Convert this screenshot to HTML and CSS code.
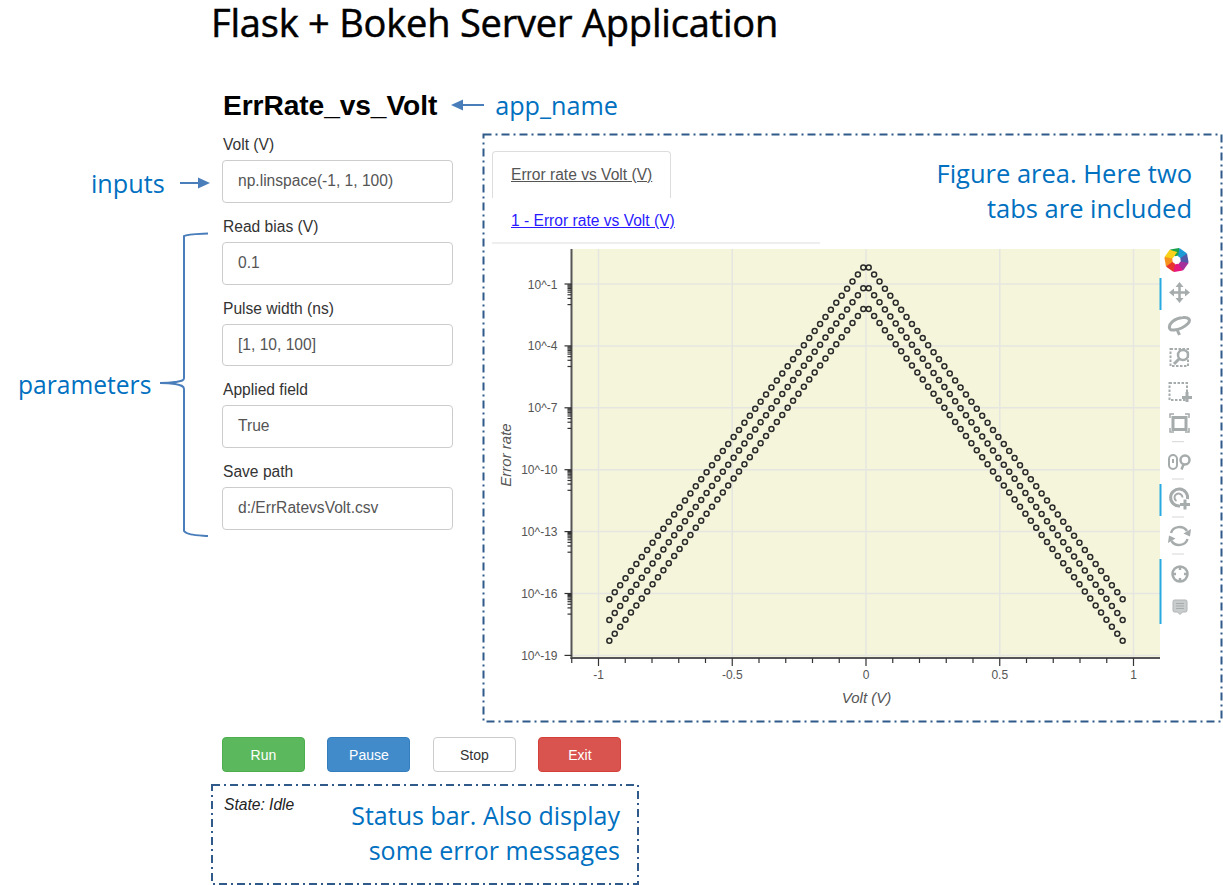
FILE: index.html
```html
<!DOCTYPE html>
<html lang="en">
<head>
<meta charset="utf-8">
<title>Flask + Bokeh Server Application</title>
<link rel="stylesheet" href="styles.css">
</head>
<body>
<div class="page">
  <h1 class="title">Flask + Bokeh Server Application</h1>
  <div class="app-head">
    <h2 class="app-name">ErrRate_vs_Volt</h2>
    <svg class="app-arrow" width="34" height="12" viewBox="0 0 34 12"><path d="M33 6H10" class="note-line"/><path d="M0 6l12-5.500v11z" class="note-fill"/></svg>
    <span class="note note-app">app_name</span>
  </div>
  <div class="workspace">
    <form class="form">
      <div class="field"><label class="field-label">Volt (V)</label><div class="input">np.linspace(-1, 1, 100)</div></div>
      <div class="field"><label class="field-label">Read bias (V)</label><div class="input">0.1</div></div>
      <div class="field"><label class="field-label">Pulse width (ns)</label><div class="input">[1, 10, 100]</div></div>
      <div class="field"><label class="field-label">Applied field</label><div class="input">True</div></div>
      <div class="field"><label class="field-label">Save path</label><div class="input">d:/ErrRatevsVolt.csv</div></div>
    </form>
    <section class="figure">
      <svg class="dash-frame" width="100%" height="100%"><rect x="0.500" y="0.500" width="738" height="587" class="dash-rect"/></svg>
      <div class="note note-figure">Figure area. Here two<br>tabs are included</div>
      <div class="tab-row"><a class="tab" href="#">Error rate vs Volt (V)</a></div>
      <div class="subtab-row"><a class="subtab" href="#">1 - Error rate vs Volt (V)</a></div>
      <svg id="plot" class="plot" width="700" height="470" viewBox="492 245 700 470"></svg>
    </section>
  </div>
  <div class="buttons">
    <button class="btn btn-run" type="button">Run</button>
    <button class="btn btn-pause" type="button">Pause</button>
    <button class="btn btn-stop" type="button">Stop</button>
    <button class="btn btn-exit" type="button">Exit</button>
  </div>
  <section class="status">
    <svg class="dash-frame" width="100%" height="100%"><rect x="1" y="1" width="426" height="99" class="dash-rect"/></svg>
    <div class="state">State: Idle</div>
    <div class="note note-status">Status bar. Also display<br>some error messages</div>
  </section>

  <div class="note note-inputs">inputs</div>
  <svg class="mark mark-inputs" width="34" height="12" viewBox="0 0 34 12"><path d="M1 6H22" class="note-line"/><path d="M31 6l-12-5.500v11z" class="note-fill"/></svg>
  <div class="note note-params">parameters</div>
  <svg class="mark mark-brace" width="52" height="306" viewBox="0 0 52 306"><path d="M49 1.500C36 2 28 2 25 4V146C25 149 22 149 16 150C10 151 8 151 1 151C8 151 10 151 16 152C22 153 25 154 25 157V299C28 303 36 303 49 304" class="brace"/></svg>
</div>
<script src="plot.js"></script>
</body>
</html>
```
FILE: styles.css
```css
* { box-sizing: border-box; }
html, body { margin: 0; padding: 0; background: #fff; }
.page {
  position: relative;
  width: 1223px;
  height: 885px;
  overflow: hidden;
  font-family: "Liberation Sans", Arial, sans-serif;
  font-size: 15.600px;
  color: #333;
}
.title {
  margin: 0;
  padding-top: 2px;
  padding-left: 211px;
  height: 46px;
  font-family: "Open Sans", sans-serif;
  font-size: 38px;
  line-height: 40px;
  font-weight: 400;
  letter-spacing: -0.200px;
  -webkit-text-stroke: 0.500px #000;
  color: #000;
  white-space: nowrap;
}
.app-head {
  display: flex;
  align-items: center;
  height: 40px;
  margin-top: 39px;
  padding-left: 223px;
}
.app-name {
  margin: 0;
  font-size: 28.200px;
  line-height: 40px;
  font-weight: 700;
  color: #000;
  letter-spacing: -0.1px;
}
.app-arrow { margin-left: 14px; }
.note {
  font-family: "Open Sans", sans-serif;
  font-size: 25.200px;
  line-height: 35px;
  color: #0070c0;
  white-space: nowrap;
}
.note-app { margin-left: 10px; }
.note-line { stroke: #4a7ebb; stroke-width: 2; fill: none; }
.note-fill { fill: #4a7ebb; }
.brace { stroke: #4a7ebb; stroke-width: 2; fill: none; }
.workspace {
  display: flex;
  height: 588px;
  margin-top: 9px;
  padding-left: 222px;
}
.form { width: 231px; }
.field { margin-bottom: 13px; }
.field-label {
  display: block;
  height: 26px;
  padding-left: 1px;
  line-height: 22px;
  color: #333;
}
.input {
  height: 42.800px;
  padding-left: 15px;
  line-height: 40px;
  color: #555;
  border: 1px solid #ccc;
  border-radius: 4px;
  white-space: nowrap;
}
.figure {
  position: relative;
  width: 739px;
  height: 588px;
  margin-left: 30px;
  padding: 17px 0 0 9px;
}
.dash-frame { position: absolute; left: 0; top: 0; overflow: visible; pointer-events: none; }
.dash-rect {
  fill: none;
  stroke: #2f5a8a;
  stroke-width: 2;
  stroke-dasharray: 8 4 2 4;
}
.note-figure {
  position: absolute;
  top: 22px;
  right: 30px;
  font-size: 25.500px;
  text-align: right;
}
.tab-row { height: 47px; }
.tab {
  display: inline-block;
  width: 179px;
  height: 47px;
  padding-left: 18px;
  line-height: 45px;
  color: #555;
  border: 1px solid #ddd;
  border-bottom: 0;
  border-radius: 4px 4px 0 0;
  white-space: nowrap;
}
.subtab-row {
  width: 328px;
  height: 46px;
  padding-left: 19px;
  line-height: 46px;
  border-bottom: 2px solid #eee;
}
.subtab { color: #2a1aff; }
.plot { display: block; }
.plot text { font-family: "Liberation Sans", Arial, sans-serif; }
.tick-label { font-size: 12px; fill: #555; }
.axis-label { font-size: 15px; fill: #555; font-style: italic; }
.plot-bg { fill: #f5f5dc; }
.grid-line { stroke: #e6e6e0; stroke-width: 1.500; }
.axis-line { stroke: #555; stroke-width: 2; }
.tick-line { stroke: #333; stroke-width: 1.200; }
.dot { fill: none; stroke: #2a2a2a; stroke-width: 1.500; }
.tool { fill: none; stroke: #a6abac; stroke-width: 2; }
.tool-dash { fill: none; stroke: #a6abac; stroke-width: 2; stroke-dasharray: 2.500 1.500; }
.tool-fill { fill: #a6abac; }
.tool-soft { fill: #c9cccc; stroke: #b0b4b4; stroke-width: 1; }
.tool-mark { stroke: #a6abac; stroke-width: 1; }
.tool-active { stroke: #26aae1; stroke-width: 2; }
.tool-sep { stroke: #d6d6d6; stroke-width: 1; }
.buttons {
  display: flex;
  gap: 22.600px;
  margin-top: 15px;
  padding-left: 222px;
}
.btn {
  width: 82.900px;
  height: 35px;
  padding: 0;
  font: 14px "Liberation Sans", Arial, sans-serif;
  border: 1px solid;
  border-radius: 4px;
}
.btn-run { background: #5cb85c; border-color: #4cae4c; color: #fff; }
.btn-pause { background: #428bca; border-color: #357ebd; color: #fff; }
.btn-stop { background: #fff; border-color: #ccc; color: #333; }
.btn-exit { background: #d9534f; border-color: #d43f3a; color: #fff; }
.status {
  position: relative;
  width: 428px;
  height: 101px;
  margin: 12px 0 0 211px;
  padding: 12px 0 0 13px;
}
.state { font-style: italic; line-height: 18px; color: #222; }
.note-status {
  position: absolute;
  right: 19px;
  top: 14px;
  font-size: 25px;
  text-align: right;
}
.note-inputs { position: absolute; left: 91px; top: 166px; }
.note-params { position: absolute; left: 18px; top: 367px; font-size: 24.600px; }
.mark { position: absolute; }
.mark-inputs { left: 179px; top: 177px; }
.mark-brace { left: 159px; top: 232px; }
```
FILE: plot.js
```js
(function () {
  var NS = "http://www.w3.org/2000/svg";
  var svg = document.getElementById("plot");

  function el(tag, attrs, text, parent) {
    var n = document.createElementNS(NS, tag);
    for (var k in attrs) n.setAttribute(k, attrs[k]);
    if (text) n.textContent = text;
    (parent || svg).appendChild(n);
    return n;
  }
  function line(x1, y1, x2, y2, cls) {
    el("line", { x1: x1, y1: y1, x2: x2, y2: y2, "class": cls });
  }

  var L = 571.5, R = 1160, T = 250, B = 659;
  var X0 = 866, XU = 267.5;

  el("rect", { x: L, y: T, width: R - L, height: B - T, "class": "plot-bg" });

  var xt = [-1, -0.5, 0, 0.5, 1];
  var yLabels = ["10^-1", "10^-4", "10^-7", "10^-10", "10^-13", "10^-16", "10^-19"];
  var yPos = yLabels.map(function (_, i) { return 285 + i * 61.9; });

  xt.forEach(function (v) { var x = X0 + v * XU; line(x, T, x, B, "grid-line"); });
  yPos.forEach(function (y) { line(L, y, R, y, "grid-line"); });

  // three curves, 96 visible samples
  [268.5, 289.2, 310].forEach(function (peak) {
    for (var k = 0; k < 48; k++) {
      var dx = 0.0101 * (2 * k + 1) * XU;
      var y = peak + k * 7.06;
      el("circle", { cx: X0 - dx, cy: y, r: 2.5, "class": "dot" });
      el("circle", { cx: X0 + dx, cy: y, r: 2.5, "class": "dot" });
    }
  });

  // axes
  line(L, T, L, B + 1, "axis-line");
  line(L - 1, B, R, B, "axis-line");

  // x ticks
  for (var i = -11; i <= 10; i++) {
    var tx = X0 + (i / 10) * XU;
    if (tx < L - 1) continue;
    var major = i % 5 === 0;
    line(tx, B, tx, B + (major ? 8 : 5), "tick-line");
  }
  xt.forEach(function (v) {
    el("text", { x: X0 + v * XU, y: 680, "text-anchor": "middle", "class": "tick-label" }, String(v));
  });

  // y ticks
  yPos.forEach(function (y, i) {
    line(L - 7, y, L, y, "tick-line");
    if (i < yPos.length - 1) {
      for (var k = 9; k >= 1; k--) {
        var my = y + -Math.log10(k / 10) * 20.6;
        line(L - 4, my, L, my, "tick-line");
      }
    }
    el("text", { x: 557.5, y: y + 4.5, "text-anchor": "end", "class": "tick-label" }, yLabels[i]);
  });

  el("text", { x: 866.5, y: 704, "text-anchor": "middle", "class": "axis-label" }, "Volt (V)");
  el("text", { x: 0, y: 0, "text-anchor": "middle", "class": "axis-label",
    transform: "translate(511 456) rotate(-90)" }, "Error rate");

  // toolbar
  function tool(markup) {
    var g = el("g", {});
    g.innerHTML = markup;
  }

  // logo: eight overlapping petals forming a ring
  var colors = ["#1aa34a", "#1c9ad6", "#4f59a8", "#a4329a", "#e5187f", "#e8352c", "#f6921e", "#f7d11a"];
  var logo = "";
  colors.forEach(function (c, i) {
    logo += '<path transform="translate(1176.500 261) rotate(' + (i * 45 - 10) + ')" d="M-4.500-11.500L4.500-11.500L7-4L-1-4Z" fill="' + c + '"/>';
  });
  tool(logo);

  [[279, 311], [485, 517], [560, 625]].forEach(function (b) {
    line(1160.5, b[0], 1160.5, b[1], "tool-active");
  });
  [442.7, 480, 518, 555].forEach(function (y) { line(1172, y, 1184, y, "tool-sep"); });

  // pan
  tool('<path class="tool" style="stroke-width:2.500" d="M1179.500 286V301M1172 293.500H1187"/>' +
    '<path class="tool-fill" d="M1179.500 283l4 5h-8zM1179.500 304l4-5h-8zM1169 293.500l5-4v8zM1190 293.500l-5-4v8z"/>');
  // lasso
  tool('<path class="tool" style="stroke-width:3" d="M1170 330c-2.500-4 4-11 13-11.500 6-.5 8 2.500 5 6-3 3-9 6-14 6.500-2 .2-3.500 0-4-1zM1177 330.500l2.500 5.500"/>');
  // box zoom
  tool('<path class="tool-dash" d="M1170.500 350H1188V367H1170.500Z"/>' +
    '<circle class="tool" style="stroke-width:2.500" cx="1183" cy="356" r="5"/>' +
    '<path class="tool" style="stroke-width:3" d="M1179 360L1174 365"/>');
  // box select
  tool('<path class="tool-dash" d="M1169.500 384H1187V401H1169.500Z"/>' +
    '<path class="tool" style="stroke-width:3" d="M1187 393V403M1182 398.500H1192"/>');
  // box edit
  tool('<rect class="tool" style="stroke-width:3" x="1173" y="418.500" width="13" height="12"/>' +
    '<path class="tool" style="stroke-width:1.500" d="M1170 419v-4h4M1185 415h4v4M1189 429v4h-4M1174 433h-4v-4"/>');
  // wheel zoom
  tool('<rect class="tool" x="1169" y="456" width="8" height="14" rx="4"/>' +
    '<path class="tool" style="stroke-width:2" d="M1173 460v4"/>' +
    '<circle class="tool" style="stroke-width:2.500" cx="1185" cy="461" r="4.500"/>' +
    '<path class="tool" style="stroke-width:2.500" d="M1183.500 465.500L1181.500 470.500"/>');
  // zoom in
  tool('<path class="tool" style="stroke-width:3" d="M1180 507a8.500 8.500 0 1 1 7.500-7"/><path class="tool" d="M1176.500 502a4 4 0 1 1 6-3.500"/>' +
    '<path class="tool" style="stroke-width:3" d="M1185 500.500V510.500M1180 505.500H1190"/>');
  // reset
  tool('<path class="tool" style="stroke-width:2.500" d="M1171 534c2-7 12-8 16-2M1187.500 540c-2 7-12 8-16 2"/>' +
    '<path class="tool-fill" d="M1191 530l-1 7.500-6.500-3zM1168 544l1-7.500 6.500 3z"/>');
  // crosshair
  tool('<circle class="tool" style="stroke-width:2.500" cx="1180" cy="575" r="7.500"/>' +
    '<path class="tool" style="stroke-width:2.500" d="M1180 567.500V571M1180 579V582.500M1172.500 575H1176M1184 575H1187.500"/>');
  // hover
  tool('<path class="tool-soft" d="M1174.500 601h11a1.500 1.500 0 0 1 1.500 1.500v9a1.500 1.500 0 0 1-1.500 1.500h-3l-2.500 2.500-2.500-2.500h-3a1.500 1.500 0 0 1-1.500-1.500v-9a1.500 1.500 0 0 1 1.500-1.500z"/>' +
    '<path class="tool-mark" d="M1176 604.500h8M1176 607h8M1176 609.500h8"/>');
})();
```
